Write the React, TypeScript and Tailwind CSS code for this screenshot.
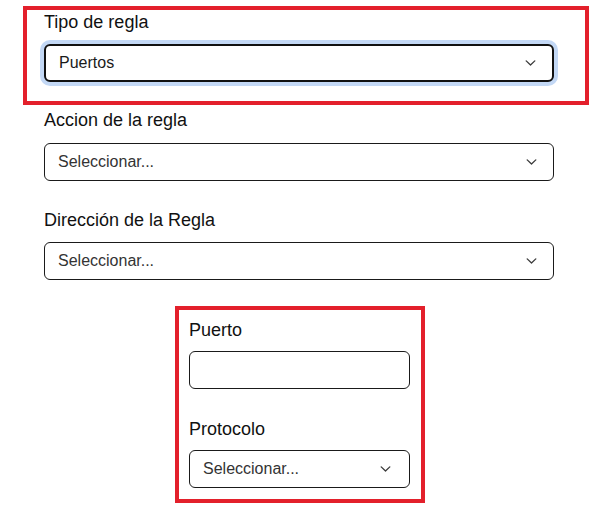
const font = { fontFamily: '"Liberation Sans", Arial, sans-serif' }

function Chevron() {
  return (
    <svg
      viewBox="0 0 11 6"
      className="pointer-events-none absolute right-[16px] top-1/2 h-[6px] w-[11px] -translate-y-1/2 text-[#3a3a3a]"
      fill="none"
      stroke="currentColor"
      strokeWidth="1.3"
      strokeLinecap="round"
      strokeLinejoin="round"
    >
      <path d="M1.2 0.9 L5.5 5 L9.8 0.9" />
    </svg>
  )
}

function Select({ value, focused, placeholder }: { value?: string; focused?: boolean; placeholder?: boolean }) {
  return (
    <div
      className={`relative flex h-[38px] items-center rounded-[6px] bg-white pl-[13px] text-base ${
        focused ? 'border-2 border-[#111] pl-[12px] shadow-[0_0_0_4px_#c3d8f5]' : 'border border-[#1a1a1a]'
      }`}
    >
      <span className={placeholder ? 'text-[#333]' : 'text-[#1a1a1a]'}>{value}</span>
      <Chevron />
    </div>
  )
}

function Label({ children, className = '' }: { children: string; className?: string }) {
  return <div className={`text-lg leading-5 text-[#111] ${className}`}>{children}</div>
}

export default function App() {
  return (
    <div className="min-h-[519px] w-[596px] bg-white" style={font}>
      <div className="ml-[44px] w-[510px] pt-[6px]">
        {/* Tipo de regla (highlighted) */}
        <div className="-ml-[21px] -mr-[35px] border-4 border-[#e3202b] pb-[19px] pl-[17px] pr-[31px] pt-[2px]">
          <Label className="mb-3">Tipo de regla</Label>
          <Select value="Puertos" focused />
        </div>

        <div className="mt-[5px]">
          <Label className="mb-[13px]">Accion de la regla</Label>
          <Select value="Seleccionar..." placeholder />
        </div>

        <div className="mt-[29px]">
          <Label className="mb-3">Dirección de la Regla</Label>
          <Select value="Seleccionar..." placeholder />
        </div>

        {/* Puerto / Protocolo (highlighted) */}
        <div className="ml-[131px] mt-[26px] w-[250px] border-4 border-[#e3202b] pb-[11px] pl-[10px] pr-[11px] pt-[10px]">
          <Label className="mb-[11px]">Puerto</Label>
          <input className="block h-[38px] w-full rounded-[6px] border border-[#1a1a1a] bg-white px-3 text-base outline-none" />
          <Label className="mb-[11px] mt-[30px]">Protocolo</Label>
          <div className="[&>div>svg]:right-[18px]">
            <Select value="Seleccionar..." placeholder />
          </div>
        </div>
      </div>
    </div>
  )
}
